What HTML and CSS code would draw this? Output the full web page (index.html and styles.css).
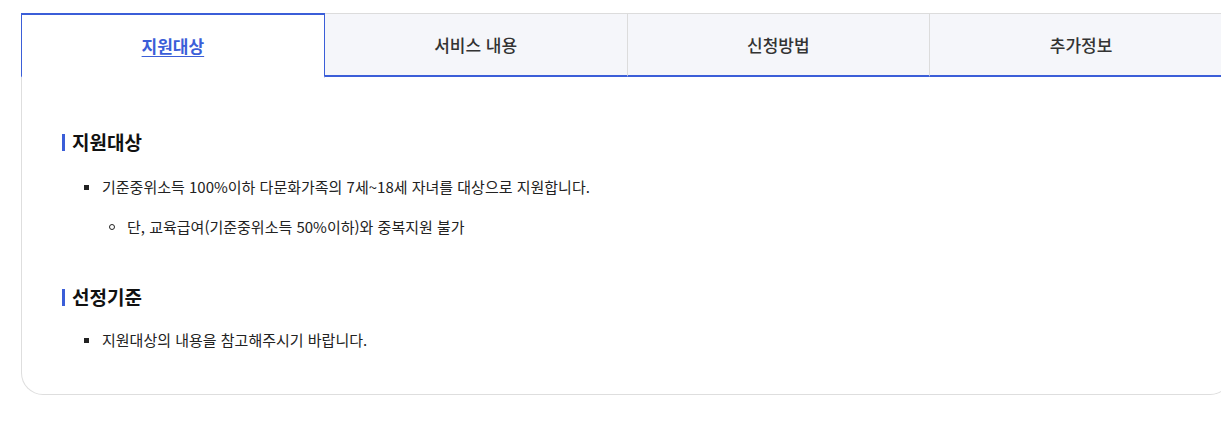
FILE: index.html
```html
<!DOCTYPE html>
<html lang="ko">
<head>
  <meta charset="UTF-8" />
  <meta name="viewport" content="width=device-width, initial-scale=1.0"/>
  <title>지원대상</title>
  <link rel="stylesheet" href="styles.css">
</head>
<body>
  <div class="tab-wrap">
    <ul class="tab-list">
      <li class="tab-item selected"><a href="#">지원대상</a></li>
      <li class="tab-item"><a href="#">서비스 내용</a></li>
      <li class="tab-item"><a href="#">신청방법</a></li>
      <li class="tab-item"><a href="#">추가정보</a></li>
    </ul>
    <div class="tab-panel">
      <h3 class="sec-title">지원대상</h3>
      <ul class="dot-list">
        <li>기준중위소득 100%이하 다문화가족의 7세~18세 자녀를 대상으로 지원합니다.
          <ul class="sub-list">
            <li>단, 교육급여(기준중위소득 50%이하)와 중복지원 불가</li>
          </ul>
        </li>
      </ul>
      <h3 class="sec-title">선정기준</h3>
      <ul class="dot-list">
        <li>지원대상의 내용을 참고해주시기 바랍니다.</li>
      </ul>
    </div>
  </div>
</body>
</html>
```

FILE: styles.css
```css
body {
  margin: 0;
  background: #fff;
  font-family: "Noto Sans CJK KR", "Noto Sans", sans-serif;
  color: #222;
}
ul { list-style: none; margin: 0; padding: 0; }
.tab-wrap {
  width: 1211px;
  margin: 13px 0 0 21px;
}
.tab-list {
  display: flex;
}
.tab-item {
  flex: 1;
  height: 61px;
  background: #f5f6fa;
  border-top: 1px solid #dcdcdc;
  border-left: 1px solid #dcdcdc;
  border-bottom: 2px solid #3b5ed8;
  display: flex;
  align-items: center;
  justify-content: center;
}
.tab-item:first-child + .tab-item { border-left: none; }
.tab-item a {
  color: #333;
  font-size: 17px;
  font-weight: 500;
  text-decoration: none;
}
.tab-item.selected {
  background: #fff;
  border: 1px solid #3b5ed8;
  border-top: 2px solid #3b5ed8;
  border-bottom: 2px solid transparent;
}
.tab-item.selected a {
  color: #3b5ed8;
  font-weight: 700;
  text-decoration: underline;
  text-underline-offset: 3px;
}
.tab-panel {
  border: 1px solid #dedede;
  border-top: none;
  border-radius: 0 0 22px 22px;
  padding: 51px 40px 42px;
}
.sec-title {
  margin: 0;
  font-size: 19px;
  line-height: 26px;
  font-weight: 700;
  color: #111;
  display: flex;
  align-items: center;
}
.sec-title::before {
  content: "";
  width: 3px;
  height: 17px;
  background: #3b5ed8;
  margin-right: 7px;
}
.dot-list {
  margin: 20px 0 45px;
  font-size: 15px;
  line-height: 24px;
}
.dot-list:last-child { margin: 18px 0 0; }
.dot-list > li {
  position: relative;
  padding-left: 40px;
}
.dot-list > li::before {
  content: "";
  position: absolute;
  left: 22px;
  top: 10px;
  width: 5px;
  height: 5px;
  background: #222;
}
.sub-list { margin-top: 16px; }
.sub-list li {
  position: relative;
  padding-left: 25px;
}
.sub-list li::before {
  content: "";
  position: absolute;
  left: 7px;
  top: 9px;
  width: 4px;
  height: 4px;
  border: 1px solid #222;
  border-radius: 50%;
}
```
